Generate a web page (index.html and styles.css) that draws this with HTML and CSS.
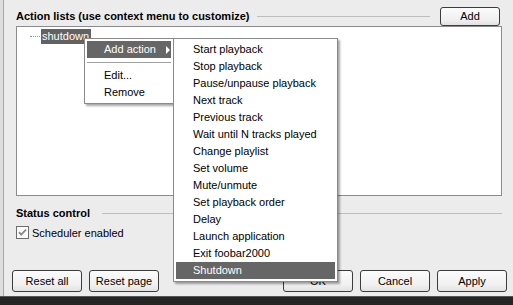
FILE: index.html
```html
<!DOCTYPE html>
<html>
<head>
<meta charset="utf-8">
<link rel="stylesheet" href="styles.css">
</head>
<body>
<div class="screen">
  <div class="panel">
    <div class="group-head">
      <span class="group-title">Action lists (use context menu to customize)</span>
      <span class="group-line"></span>
      <button class="btn btn-add">Add</button>
    </div>
    <div class="listbox">
      <div class="tree-item"><span class="tree-dots"></span><span class="tree-label">shutdown</span></div>
    </div>
    <div class="group-head status-head">
      <span class="group-title">Status control</span>
      <span class="group-line"></span>
    </div>
    <label class="check-row">
      <span class="checkbox"><svg width="13" height="13" viewBox="0 0 13 13"><rect x="0.5" y="0.5" width="12" height="12" fill="#fbfbfb" stroke="#6e6e6e"/><path d="M3 6.2 L5.2 8.6 L10 3.6" fill="none" stroke="#8a8a8a" stroke-width="1.8"/></svg></span>
      <span>Scheduler enabled</span>
    </label>
    <div class="button-row">
      <div class="btn-group">
        <button class="btn">Reset all</button>
        <button class="btn">Reset page</button>
      </div>
      <div class="btn-group">
        <button class="btn">OK</button>
        <button class="btn">Cancel</button>
        <button class="btn">Apply</button>
      </div>
    </div>
  </div>
  <div class="taskbar"></div>

  <div class="menu menu-main">
    <div class="menu-item active">Add action<span class="arrow"></span></div>
    <div class="menu-sep"></div>
    <div class="menu-item">Edit...</div>
    <div class="menu-item">Remove</div>
  </div>
  <div class="menu menu-sub">
    <div class="menu-item">Start playback</div>
    <div class="menu-item">Stop playback</div>
    <div class="menu-item">Pause/unpause playback</div>
    <div class="menu-item">Next track</div>
    <div class="menu-item">Previous track</div>
    <div class="menu-item">Wait until N tracks played</div>
    <div class="menu-item">Change playlist</div>
    <div class="menu-item">Set volume</div>
    <div class="menu-item">Mute/unmute</div>
    <div class="menu-item">Set playback order</div>
    <div class="menu-item">Delay</div>
    <div class="menu-item">Launch application</div>
    <div class="menu-item">Exit foobar2000</div>
    <div class="menu-item active">Shutdown</div>
  </div>
</div>
</body>
</html>
```

FILE: styles.css
```css
* { box-sizing: border-box; }
html, body { margin: 0; padding: 0; }
body {
  width: 513px;
  height: 305px;
  overflow: hidden;
  font-family: "Liberation Sans", Arial, sans-serif;
  font-size: 11px;
  color: #000;
  background: #dedede;
}
.screen {
  position: relative;
  width: 513px;
  height: 305px;
  display: flex;
  flex-direction: column;
}
.panel {
  height: 296px;
  margin-left: 3px;
  border-left: 1px solid #a8a8a8;
  background: #ececec;
  padding: 6px 11px 0 12px;
  display: flex;
  flex-direction: column;
}
.taskbar {
  height: 9px;
  background: #252525;
  border-top: 1px solid #555;
}
.group-head {
  display: flex;
  align-items: center;
  height: 20px;
}
.group-title {
  font-weight: bold;
  white-space: nowrap;
}
.group-line {
  flex: 1;
  height: 1px;
  background: #bdbdbd;
  margin-left: 8px;
}
.btn {
  font-family: inherit;
  font-size: 11px;
  color: #000;
  background: linear-gradient(#fbfbfb, #f0f0f0 70%, #e2e2e2);
  border: 1px solid #3c3c3c;
  border-radius: 3px;
  padding: 0;
  width: 70px;
  height: 22px;
}
.btn-add {
  width: 60px;
  height: 19px;
  margin-left: 10px;
  margin-right: 2px;
}
.listbox {
  height: 170px;
  background: #fff;
  border: 1px solid #8c8c8c;
  padding: 2px 0 0 13px;
}
.tree-item {
  display: flex;
  align-items: center;
  height: 15px;
}
.tree-dots {
  width: 10px;
  height: 1px;
  border-top: 1px dotted #9a9a9a;
  margin-right: 1px;
}
.tree-label {
  background: #626262;
  color: #fff;
  padding: 0 2px 0 1px;
  line-height: 15px;
}
.status-head {
  margin-top: 10px;
  height: 14px;
}
.status-head .group-line { margin-left: 12px; }
.check-row {
  display: flex;
  align-items: center;
  gap: 3px;
  margin-top: 6px;
  height: 13px;
}
.checkbox { display: flex; width: 13px; height: 13px; }
.button-row {
  display: flex;
  justify-content: space-between;
  margin: 31px -5px 0 -4px;
}
.btn-group {
  display: flex;
  gap: 7px;
}
.menu {
  position: absolute;
  background: #fff;
  border: 1px solid #8a8a8a;
  padding: 2px;
  box-shadow: 2px 2px 2px rgba(0,0,0,0.35);
}
.menu-main {
  left: 84px;
  top: 38px;
  width: 90px;
}
.menu-sub {
  left: 173px;
  top: 38px;
  width: 165px;
}
.menu-item {
  position: relative;
  height: 17px;
  line-height: 16px;
  padding-left: 17px;
  white-space: nowrap;
}
.menu-item.active {
  background: #666;
  color: #fff;
}
.menu-sep {
  height: 9px;
  display: flex;
  align-items: center;
}
.menu-sep::before {
  content: "";
  flex: 1;
  height: 1px;
  background: #a0a0a0;
}
.arrow {
  position: absolute;
  right: 1px;
  top: 5px;
  width: 0;
  height: 0;
  border-top: 4px solid transparent;
  border-bottom: 4px solid transparent;
  border-left: 4px solid #fff;
}
```
